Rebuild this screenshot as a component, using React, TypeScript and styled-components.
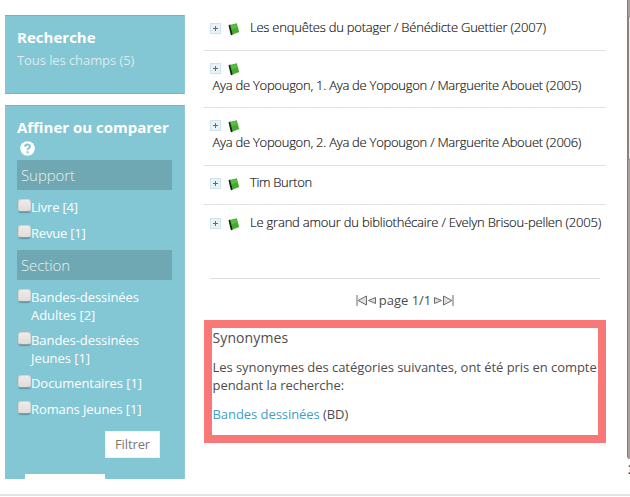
import React from "react";
import styled, { createGlobalStyle } from "styled-components";

const Global = createGlobalStyle`
  *{box-sizing:border-box}
  body{margin:0;background:#fff;overflow:hidden}
`;
const Page = styled.div`
  width:630px;height:497px;display:flex;flex-direction:column;overflow:hidden;
  font-family:"Open Sans","Noto Sans",sans-serif;color:#4d4d4d;background:#fff;
`;
const Columns = styled.div`display:flex;height:494px;flex:none;`;
const Footer = styled.div`height:2px;background:#dfe4e8;`;
const Sidebar = styled.aside`width:180px;margin-left:5px;flex:none;`;
const Panel = styled.section<{ $h: number; $top: number }>`
  margin-top:${p => p.$top}px;height:${p => p.$h}px;overflow:hidden;padding:0 12px;
  background:#83c6d4;border-top:1px solid #76b2c0;border-right:1px solid #90cbd7;
`;
const Search = styled(Panel)`border-bottom:1px solid #76b2c0;`;
const Title = styled.h3`
  margin:11px 0 0;font-size:15px;line-height:20px;font-weight:700;color:#fff;white-space:nowrap;
`;
const SearchTitle = styled(Title)`letter-spacing:.02px;`;
const Sub = styled.div`font-size:13px;line-height:18px;color:#dcebee;margin-top:4px;letter-spacing:-.08px;white-space:nowrap;`;
const Help = styled.svg`display:block;margin:4px 0 4px 3px;`;
const Band = styled.div`
  height:30px;width:155px;background:#6fa8b3;color:#e6f0f2;font-size:15px;line-height:30px;padding-left:4px;font-weight:300;
  letter-spacing:-.08px;
`;
const Options = styled.div`padding:9px 0 0 1px;`;
const Option = styled.label<{ $gap: number }>`
  display:flex;font-size:13px;line-height:17.5px;color:#fff;margin-bottom:${p => p.$gap}px;
`;
const Box = styled.span`
  width:13px;height:13px;flex:none;border-radius:3px;
  background:linear-gradient(#eeecea,#dfdcd9);border:1px solid #d6d3d0;border-bottom-color:#8f9c9c;
  box-shadow:0 1px 1px rgba(70,110,120,.55);
`;
const OptionText = styled.span<{ $ls: number }>`
  letter-spacing:${p => p.$ls}px;white-space:nowrap;
`;
const Line = styled.span`display:block;`;
const Button = styled.button`
  display:block;margin:12px 12px 0 auto;width:55px;height:27px;border:1px solid #eef3f4;background:#fff;padding:0;
  font:13px/24px "Open Sans",sans-serif;color:#777;letter-spacing:-.1px;
`;
const NextField = styled.div`width:80px;height:20px;margin:16px 0 0 8px;background:#fff;`;

const Main = styled.main`width:402px;margin-left:19px;flex:none;`;
const Entry = styled.article<{ $h: number; $pt: number; $wrap?: boolean; $last?: boolean }>`
  height:${p => p.$h}px;padding:${p => p.$pt}px 0 0 6px;display:flex;
  flex-direction:${p => (p.$wrap ? "column" : "row")};
  background:${p => (p.$last ? "none" : "repeating-linear-gradient(90deg,#dcdcdc 0 2px,#ececec 2px 3px) bottom / 100% 1px no-repeat")};
`;
const Icons = styled.span`display:flex;gap:7px;width:40px;flex:none;height:14px;`;
const Name = styled.span<{ $ls: number; $wrap?: boolean }>`
  font-size:13px;line-height:18px;color:#111;font-weight:300;-webkit-text-stroke:.15px #111;white-space:nowrap;
  letter-spacing:${p => p.$ls}px;margin:${p => (p.$wrap ? "-1px 0 0 2.5px" : "-5px 0 0 0")};
`;
const Pager = styled.nav`
  margin:35px 6px 0;height:42px;border-top:1px solid #dedede;display:flex;justify-content:center;
  padding-top:12px;font-size:13px;line-height:18px;white-space:nowrap;gap:3px;
`;
const Arrow = styled.svg`margin-top:4px;`;
const Synonyms = styled.section`
  height:123px;border:8px solid #f87777;font-size:13px;line-height:17.5px;white-space:nowrap;
`;
const SynTitle = styled.h4`margin:1px 0 0 .5px;font-size:14px;line-height:18px;font-weight:400;letter-spacing:.1px;`;
const Text = styled.p<{ $top: number }>`margin:${p => p.$top}px 0 0 .5px;`;
const Fit = styled.span<{ $ls: number }>`letter-spacing:${p => p.$ls}px;`;
const Link = styled.a`color:#3e9fca;`;
const Rail = styled.aside`
  width:3px;margin-left:auto;height:494px;overflow:hidden;font-size:13px;color:#111;flex:none;
`;
const Track = styled.div`height:459px;background:#aaa09b;border-left:1px solid #857d79;border-radius:0 0 0 3px;padding-top:16px;`;
const Thumb = styled.div`height:144px;background:#ebe8e5;border:1px solid #8c8581;border-right:0;border-radius:3px 0 0 3px;`;
const Count = styled.div`line-height:20px;margin-left:1px;font-weight:600;`;

const Plus = () => (
  <svg width="11" height="11" viewBox="0 0 11 11">
    <rect x=".5" y=".5" width="10" height="10" fill="#e9f2f7" stroke="#cfe3ee" />
    <path d="M3 5.5h5M5.5 3v5" stroke="#6b6b6b" />
  </svg>
);
const Book = () => (
  <svg width="12" height="13" viewBox="0 0 12 13">
    <path d="M.5 2.5 2.3 1.2 5 10.5l-.8 1.8L2.8 12z" fill="#17251a" />
    <path d="M2 2.1 8.8.3 11.2 9.1l-6.5 2.3z" fill="#43ac2c" />
    <path d="M2.8 2.6 8.4 1l.8 3.4-5.3 1.8z" fill="#5cbd42" />
  </svg>
);

const entries = [
  { t: "Les enquêtes du potager / Bénédicte Guettier (2007)", h: 51, pt: 23, ls: -0.22 },
  { t: "Aya de Yopougon, 1. Aya de Yopougon / Marguerite Abouet (2005)", h: 57, pt: 12, ls: -0.265, wrap: true },
  { t: "Aya de Yopougon, 2. Aya de Yopougon / Marguerite Abouet (2006)", h: 58, pt: 12, ls: -0.265, wrap: true },
  { t: "Tim Burton", h: 39, pt: 12, ls: -0.33 },
  { t: "Le grand amour du bibliothécaire / Evelyn Brisou-pellen (2005)", h: 38, pt: 13, ls: -0.205 },
];
const support = [
  { lines: ["Livre [4]"], ls: -0.18, gap: 8.5 },
  { lines: ["Revue [1]"], ls: -0.2, gap: 7.5 },
];
const sections = [
  { lines: ["Bandes-dessinées", "Adultes [2]"], ls: -0.06, gap: 8 },
  { lines: ["Bandes-dessinées", "Jeunes [1]"], ls: -0.06, gap: 8 },
  { lines: ["Documentaires [1]"], ls: -0.06, gap: 8.5 },
  { lines: ["Romans Jeunes [1]"], ls: -0.1, gap: 0 },
];
const OptionList = ({ items }: { items: typeof support }) => (
  <Options>
    {items.map((o, i) => (
      <Option key={i} $gap={o.gap}>
        <Box />
        <OptionText $ls={o.ls}>
          {o.lines.map((l, j) => <Line key={j}>{l}</Line>)}
        </OptionText>
      </Option>
    ))}
  </Options>
);

export default function App() {
  return (
    <Page>
      <Global />
      <Columns>
        <Sidebar>
          <Search $top={15} $h={79}>
            <SearchTitle>Recherche</SearchTitle>
            <Sub>Tous les champs (5)</Sub>
          </Search>
          <Panel $top={11} $h={374}>
            <Title>Affiner ou comparer</Title>
            <Help width="15" height="15" viewBox="0 0 15 15">
              <circle cx="7.5" cy="7.5" r="7.3" fill="#fff" />
              <path d="M5.1 5.7c.1-3 5-2.8 4.8-.1C9.8 7.3 7.5 7.2 7.5 9M7.5 10.3v1.9" fill="none" stroke="#83c6d4" strokeWidth="2" />
            </Help>
            <Band>Support</Band>
            <OptionList items={support} />
            <Band>Section</Band>
            <OptionList items={sections} />
            <Button>Filtrer</Button>
            <NextField />
          </Panel>
        </Sidebar>
        <Main>
          {entries.map((e, i) => (
            <Entry key={i} $h={e.h} $pt={e.pt} $wrap={e.wrap} $last={i === 4}>
              <Icons><Plus /><Book /></Icons>
              <Name $ls={e.ls} $wrap={e.wrap}>{e.t}</Name>
            </Entry>
          ))}
          <Pager>
            <Arrow width="20" height="11" viewBox="0 0 20 11" fill="#e0e0e0" stroke="#6c6c6c">
              <path d="M1 0v11M10.500 1v9L2 5.500zM19.500 2.500v6L12.500 5.500z" />
            </Arrow>
            <Fit $ls={0}>page 1/1</Fit>
            <Arrow width="20" height="11" viewBox="0 0 20 11" fill="#e0e0e0" stroke="#6c6c6c">
              <path d="M19 0v11M9.500 1v9L18 5.500zM.5 2.500v6L7.500 5.500z" />
            </Arrow>
          </Pager>
          <Synonyms>
            <SynTitle>Synonymes</SynTitle>
            <Text $top={12}>
              <Fit $ls={-0.05}>Les synonymes des catégories suivantes, ont été pris en compte</Fit><br />
              <Fit $ls={-0.05}>pendant la recherche:</Fit>
            </Text>
            <Text $top={12}><Fit $ls={-0.06}><Link>Bandes dessinées</Link> (BD)</Fit></Text>
          </Synonyms>
        </Main>
        <Rail>
          <Track><Thumb /></Track>
          <Count>3</Count>
        </Rail>
      </Columns>
      <Footer />
    </Page>
  );
}
